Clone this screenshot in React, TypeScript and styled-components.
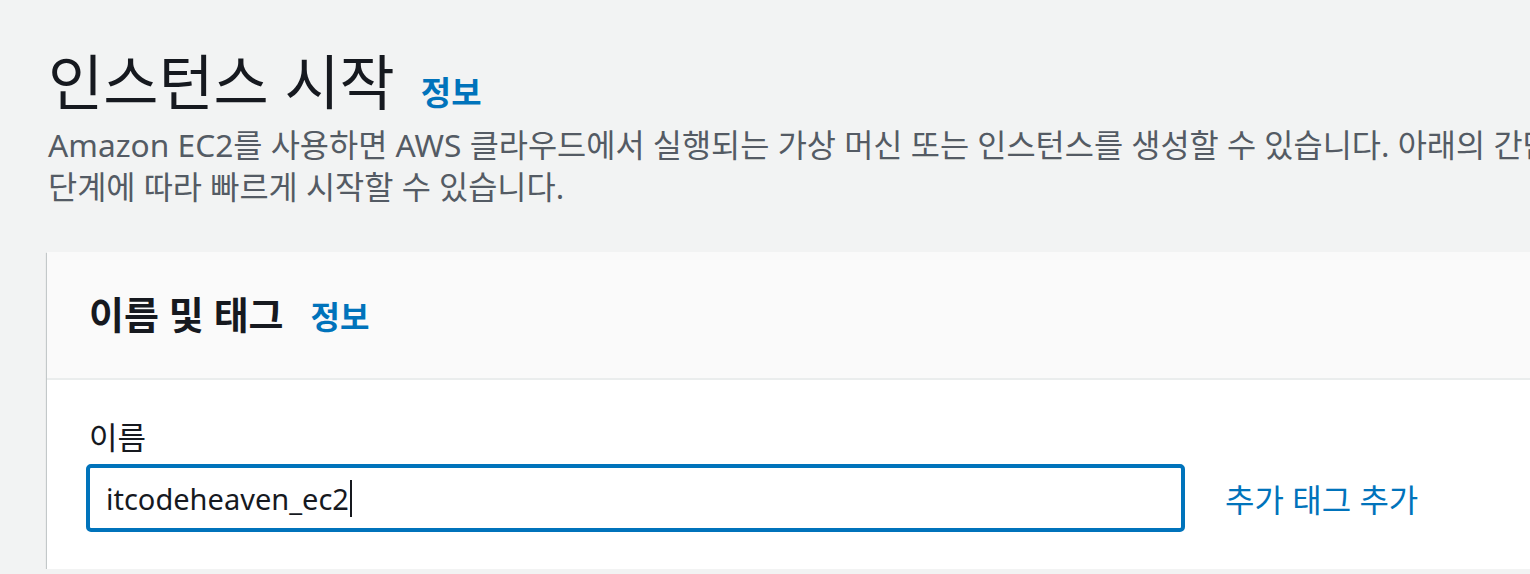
import React from "react";
import styled, { createGlobalStyle } from "styled-components";

const GlobalStyle = createGlobalStyle`
  html, body {
    margin: 0;
    padding: 0;
    overflow: hidden;
    background: #f2f3f3;
  }
  body {
    font-family: "Noto Sans", "Noto Sans CJK KR", sans-serif;
    color: #16191f;
  }
`;

const Page = styled.div`
  width: 1700px;
  padding: 40px 0 0 48px;
  box-sizing: border-box;
`;

const TitleRow = styled.div`
  display: flex;
  align-items: baseline;
  gap: 26px;
`;

const Title = styled.h1`
  margin: 0;
  font-size: 60px;
  font-weight: 400;
  line-height: 84px;
  color: #16191f;
`;

const InfoLink = styled.a<{ $size: number }>`
  color: #0073bb;
  font-size: ${(p) => p.$size}px;
  font-weight: 700;
  text-decoration: none;
`;

const Description = styled.p`
  margin: 0;
  width: 1600px;
  font-size: 31.7px;
  line-height: 42px;
  color: #545b64;
  word-break: keep-all;
`;

const Card = styled.section`
  margin: 44px 0 0 -1px;
  width: 1620px;
  background: #fff;
  box-shadow: 0 1px 1px 0 rgba(0, 28, 36, 0.3), 1px 1px 1px 0 rgba(0, 28, 36, 0.15),
    -1px 1px 1px 0 rgba(0, 28, 36, 0.15);
`;

const CardHeader = styled.div`
  display: flex;
  align-items: baseline;
  gap: 27px;
  background: #fafafa;
  border-bottom: 2px solid #eaeded;
  padding: 36px 42px 0;
  height: 128px;
  box-sizing: border-box;
`;

const CardTitle = styled.h2`
  margin: 0;
  font-size: 38px;
  font-weight: 700;
  line-height: 52px;
  color: #16191f;
`;

const CardBody = styled.div`
  padding: 36px 42px 37px;
`;

const Label = styled.label`
  display: block;
  font-size: 31px;
  line-height: 42px;
  color: #16191f;
  margin-bottom: 6px;
`;

const FieldRow = styled.div`
  display: flex;
  align-items: center;
  gap: 40px;
`;

const NameInput = styled.div`
  width: 1099px;
  height: 68px;
  margin-left: -3px;
  box-sizing: border-box;
  border: 4px solid #0073bb;
  border-radius: 5px;
  display: flex;
  align-items: center;
  padding: 0 16px;
  font-size: 29px;
  color: #16191f;
  background: #fff;
`;

const Caret = styled.span`
  display: inline-block;
  width: 2px;
  height: 37px;
  background: #16191f;
  margin-left: 1px;
`;

const TagLink = styled.a`
  color: #0073bb;
  font-size: 32px;
  text-decoration: none;
`;

export default function App() {
  return (
    <>
      <GlobalStyle />
      <Page>
        <TitleRow>
          <Title>인스턴스 시작</Title>
          <InfoLink $size={33}>정보</InfoLink>
        </TitleRow>
        <Description>
          Amazon EC2를 사용하면 AWS 클라우드에서 실행되는 가상 머신 또는 인스턴스를 생성할 수 있습니다. 아래의 간단한
          단계에 따라 빠르게 시작할 수 있습니다.
        </Description>
        <Card>
          <CardHeader>
            <CardTitle>이름 및 태그</CardTitle>
            <InfoLink $size={32}>정보</InfoLink>
          </CardHeader>
          <CardBody>
            <Label>이름</Label>
            <FieldRow>
              <NameInput>
                itcodeheaven_ec2
                <Caret />
              </NameInput>
              <TagLink>추가 태그 추가</TagLink>
            </FieldRow>
          </CardBody>
        </Card>
      </Page>
    </>
  );
}
